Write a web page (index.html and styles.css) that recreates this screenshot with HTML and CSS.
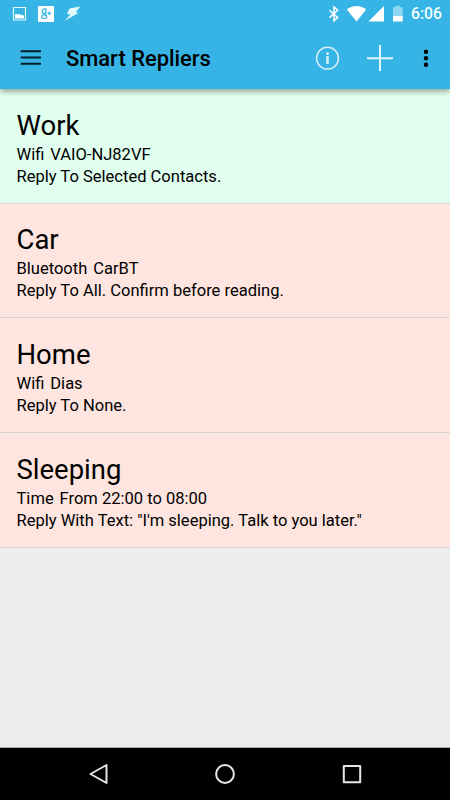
FILE: index.html
```html
<!DOCTYPE html>
<html lang="en">
<head>
<meta charset="utf-8">
<title>Smart Repliers</title>
<link rel="stylesheet" href="styles.css">
</head>
<body>
<div class="screen">
  <header class="top">
    <div class="status">
      <svg class="status-left" width="90" height="28" viewBox="0 0 90 28">
        <path d="M13.500 7.500h12v12.500h-12z" fill="none" stroke="#e4fafa" stroke-width="1.200"/>
        <path d="M15 18.500v-4l1.500-.8 1.300 1 1.300-1.200 1.300 1.700 1.500-.7 2.100 1.500v2.500z" fill="#fff"/>
        <rect x="38" y="6" width="16" height="16" rx="1" fill="#fff"/>
        <g fill="none" stroke="#35b4e5" stroke-width="1.200">
          <ellipse cx="44.300" cy="11.300" rx="1.900" ry="2.300"/>
          <path d="M44.500 9h2.500M45 13.500l1.600 2"/>
          <ellipse cx="44.200" cy="16.700" rx="2.500" ry="1.800"/>
          <path d="M47.500 13.200h3.600M49.300 11.400v3.600"/>
        </g>
        <path d="M69.500 8.500L80.300 6.500 75.800 12.200 78.500 13 64.200 21 70.300 14.800 67 13.800z" fill="#e4fafa"/>
      </svg>
      <svg class="status-right" width="84" height="28" viewBox="324 0 84 28">
        <path d="M329.500 10.200l8.200 7.300-3.700 3.300V7l3.700 3.300-8.200 7.300" fill="none" stroke="#fff" stroke-width="1.500"/>
        <path d="M346.800 9.600C352 4.800 361 4.800 366.200 9.600L356.500 21.500z" fill="#fff"/>
        <path d="M384 6v15.500h-15.500z" fill="#fff"/>
        <path d="M393 7.200h2.500V5.800h4.500v1.400h2.800V16H393z" fill="#8dd5f0"/>
        <path d="M393 16h9.800v5.500H393z" fill="#fff"/>
      </svg>
      <span class="clock">6:06</span>
    </div>
    <div class="appbar">
      <svg class="menu" width="22" height="16" viewBox="0 0 22 16"><path d="M.7 1.300h20.300M.7 7.500h20.300M.7 13.700h20.300" stroke="#06202a" stroke-width="2"/></svg>
      <h1 class="title">Smart Repliers</h1>
      <svg class="actions" width="120" height="32" viewBox="312 42 120 32">
        <circle cx="327.500" cy="58.200" r="10.900" fill="none" stroke="#d5f1fa" stroke-width="1.500"/>
        <path d="M327.500 56v7.800" stroke="#d5f1fa" stroke-width="2.600"/>
        <circle cx="327.500" cy="53.400" r="1.500" fill="#d5f1fa"/>
        <path d="M367 58.200h26M380 45v26" stroke="#e0f6fc" stroke-width="2"/>
        <g fill="#000"><circle cx="426" cy="51.700" r="2.200"/><circle cx="426" cy="58.200" r="2.200"/><circle cx="426" cy="64.700" r="2.200"/></g>
      </svg>
    </div>
  </header>
  <main class="list">
    <section class="row active">
      <h2>Work</h2>
      <p><span class="kind">Wifi</span> VAIO-NJ82VF</p>
      <p>Reply To Selected Contacts.</p>
    </section>
    <section class="row">
      <h2>Car</h2>
      <p><span class="kind">Bluetooth</span> CarBT</p>
      <p>Reply To All. Confirm before reading.</p>
    </section>
    <section class="row">
      <h2>Home</h2>
      <p><span class="kind">Wifi</span> Dias</p>
      <p>Reply To None.</p>
    </section>
    <section class="row">
      <h2>Sleeping</h2>
      <p><span class="kind">Time</span> From 22:00 to 08:00</p>
      <p>Reply With Text: "I'm sleeping. Talk to you later."</p>
    </section>
  </main>
  <nav class="navbar">
    <svg width="450" height="52" viewBox="0 748 450 52" fill="none" stroke="#e6e6e2" stroke-width="2" stroke-linejoin="round">
      <path d="M106.500 765v18L90.500 774z"/>
      <circle cx="225" cy="774" r="8.900"/>
      <path d="M343.800 766h16.400v16.200h-16.400z"/>
    </svg>
  </nav>
</div>
</body>
</html>
```

FILE: styles.css
```css
* { box-sizing: border-box; }
body, h1, h2, p { margin: 0; }
body { font-family: Roboto, "Liberation Sans", sans-serif; color: #000; }
svg { display: block; flex: none; }
.screen {
  width: 450px;
  height: 800px;
  display: flex;
  flex-direction: column;
  overflow: hidden;
  background: #ededed;
}
.top {
  position: relative;
  height: 89px;
  flex: none;
  background: #35b4e5;
  box-shadow: 0 2px 6px rgba(0, 0, 0, .4);
}
.status { height: 28px; display: flex; align-items: center; }
.status-right { margin-left: auto; }
.clock {
  width: 42px;
  padding-left: 3px;
  color: #f4fdff;
  font-size: 15.700px;
  font-weight: 500;
  line-height: 28px;
  white-space: nowrap;
}
.appbar { height: 61px; display: flex; align-items: center; padding: 0 18px 1px 20px; }
.menu { margin-right: 24px; }
.title { flex: 1; padding-top: 1px; font-size: 21.900px; font-weight: 500; line-height: 30px; white-space: nowrap; }
.list { flex: 1; }
.row {
  height: 114.670px;
  padding: 18.700px 16.500px 0;
  background: #ffe5df;
  border-bottom: 1px solid #d8d5d1;
}
.row.active { background: #e0ffef; }
.row h2 { font-size: 27.500px; font-weight: 400; line-height: 36px; }
.row p { font-size: 16.540px; line-height: 22px; white-space: nowrap; }
.kind { margin-right: 1.800px; }
.navbar { height: 53px; flex: none; background: #000; border-top: 1px solid #a9a9a9; }
```
